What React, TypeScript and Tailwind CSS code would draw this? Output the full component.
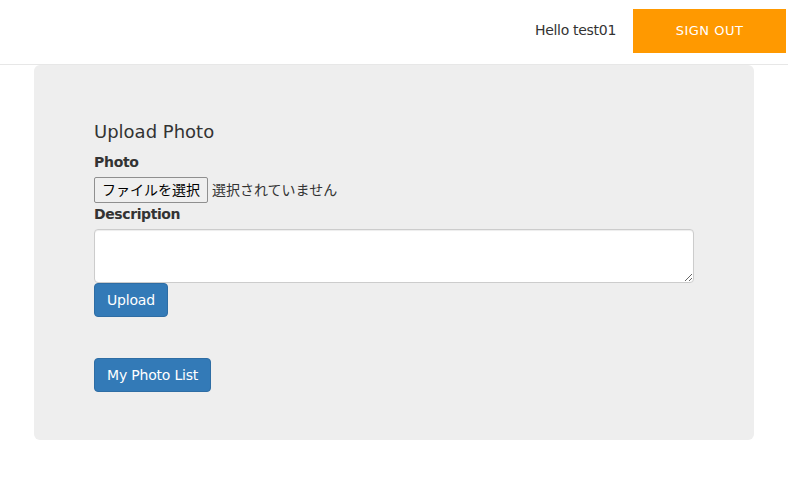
import { useState } from 'react';

export default function App() {
  const [desc, setDesc] = useState('');

  return (
    <div className="min-h-[492px] bg-white text-[14px] leading-[20px] text-[#333]" style={{ fontFamily: '"DejaVu Sans", "Noto Sans CJK JP", sans-serif' }}>
      {/* ヘッダー */}
      <header className="flex h-[65px] items-start justify-end border-b border-[#e7e7e7] pr-[2px]">
        <span className="mr-[17px] mt-[20px] text-[14px] tracking-[-0.3px]">Hello test01</span>
        <button className="mt-[9px] h-[44px] w-[153px] bg-[#ff9900] text-[13px] tracking-[0.5px] text-white">
          SIGN OUT
        </button>
      </header>

      <div className="mx-auto w-[750px] px-[15px]">
        <div className="rounded-[6px] bg-[#eeeeee] px-[60px] pb-[48px] pt-[48px]">
          <h4 className="mb-[10px] mt-[9px] text-[18px] leading-[20px] text-[#333]">Upload Photo</h4>

          <label className="mb-[5px] block font-bold tracking-[-0.3px]">Photo</label>
          <div className="flex h-[27px] items-start">
            <button className="h-[26px] rounded-[2px] border border-[#8f8f8f] bg-[#efefef] px-[7px] text-[14px] text-black">
              ファイルを選択
            </button>
            <span className="ml-[4px] mt-[3px]">選択されていません</span>
          </div>

          <label className="mb-[5px] block font-bold tracking-[-0.4px]">Description</label>
          <textarea
            value={desc}
            onChange={e => setDesc(e.target.value)}
            className="block h-[54px] w-[600px] rounded-[4px] border border-[#ccc] bg-white px-[12px] py-[6px] shadow-[inset_0_1px_1px_rgba(0,0,0,0.075)] outline-none"
          />
          <button className="block h-[34px] rounded-[4px] border border-[#2e6da4] bg-[#337ab7] px-[12px] text-[14px] tracking-[-0.2px] text-white">
            Upload
          </button>

          <button className="mt-[41px] block h-[34px] rounded-[4px] border border-[#2e6da4] bg-[#337ab7] px-[12px] text-[14px] tracking-[-0.2px] text-white">
            My Photo List
          </button>
        </div>
      </div>
    </div>
  );
}
